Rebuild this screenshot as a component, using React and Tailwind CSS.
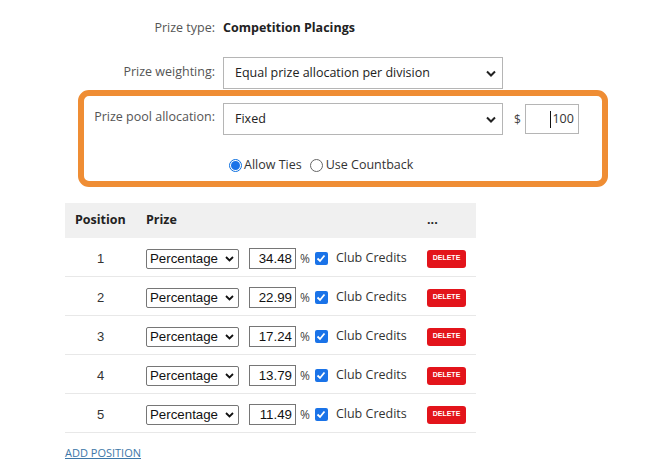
import React from "react";

const Chevron = () => (
  <svg width="10" height="7" viewBox="0 0 10 7" className="shrink-0">
    <path d="M1 1.5 L5 5.5 L9 1.5" fill="none" stroke="#222" strokeWidth="2" />
  </svg>
);

const SmallChevron = () => (
  <svg width="9" height="6" viewBox="0 0 9 6" className="shrink-0">
    <path d="M1 1 L4.5 4.5 L8 1" fill="none" stroke="#111" strokeWidth="1.8" />
  </svg>
);

const BigSelect = ({ value }) => (
  <div className="flex h-[32px] w-[280px] items-center justify-between border border-[#b5b5b5] bg-white pl-[11px] pr-[6px] text-[12.5px] text-[#222]">
    <span>{value}</span>
    <Chevron />
  </div>
);

const Radio = ({ checked }) => (
  <span className="flex h-[13px] w-[13px] items-center justify-center rounded-full border border-[#666] bg-white" style={checked ? { borderColor: "#0b6fe0" } : {}}>
    {checked && <span className="h-[9px] w-[9px] rounded-full bg-[#1a73e8]" />}
  </span>
);

const Checkbox = () => (
  <span className="flex h-[13px] w-[13px] items-center justify-center rounded-[2px] bg-[#1a73e8]">
    <svg width="10" height="9" viewBox="0 0 10 9">
      <path d="M1.5 4.5 L4 7 L8.5 1.5" fill="none" stroke="#fff" strokeWidth="1.8" />
    </svg>
  </span>
);

const rows = [
  ["1", "34.48"],
  ["2", "22.99"],
  ["3", "17.24"],
  ["4", "13.79"],
  ["5", "11.49"],
];

export default function App() {
  return (
    <div className="h-[472px] w-[645px] bg-white text-[12.5px] text-[#333]" style={{ fontFamily: '"Open Sans", "Noto Sans", sans-serif' }}>
      <div className="pt-[18px]">
        <div className="ml-[84px] flex h-[20px] items-center">
          <div className="w-[131px] text-right text-[#555]">Prize type:</div>
          <div className="ml-[8px] font-bold text-[#222]">Competition Placings</div>
        </div>
        <div className="ml-[84px] mt-[19px] flex items-start">
          <div className="w-[131px] pt-[6px] text-right text-[#555]">Prize weighting:</div>
          <div className="ml-[8px] flex">
            <BigSelect value="Equal prize allocation per division" />
          </div>
        </div>
        <div className="ml-[78px] mt-[1px] h-[97px] w-[530px] rounded-[11px] border-[6px] border-[#ef8d34] pt-[7px]">
          <div className="flex items-start">
            <div className="w-[131px] pt-[5px] text-right text-[#555]">Prize pool allocation:</div>
            <div className="ml-[8px] flex items-start">
              <BigSelect value="Fixed" />
              <span className="ml-[11px] pt-[8px] text-[12px] text-[#444]">$</span>
              <div className="ml-[4px] mt-[1px] flex h-[30px] w-[54px] items-center justify-end border border-[#b5b5b5] bg-white pr-[4px] text-[12.5px] text-[#333]">
                <span className="mr-[1px] h-[17px] w-[1px] bg-[#111]" />
                <span>100</span>
              </div>
            </div>
          </div>
          <div className="ml-[145px] mt-[21px] flex items-center text-[12.5px] text-[#333]">
            <Radio checked />
            <span className="ml-[2px]">Allow Ties</span>
            <span className="ml-[8px]"><Radio /></span>
            <span className="ml-[3px]">Use Countback</span>
          </div>
        </div>

        <div className="ml-[65px] mt-[16px] w-[411px]">
          <div className="flex h-[35px] items-center bg-[#f0f0f0] font-bold text-[#222]">
            <div className="w-[71px] pl-[10px]">Position</div>
            <div className="w-[281px] pl-[10px]">Prize</div>
            <div className="pl-[10px]">...</div>
          </div>
          {rows.map(([n, v]) => (
            <div key={n} className="flex h-[39px] items-center border-b border-[#e8e8e8] pt-[3px]">
              <div className="w-[71px] text-center text-[13px] text-[#333]" style={{ fontFamily: '"Liberation Sans", Arial, sans-serif' }}>{n}</div>
              <div className="flex w-[281px] items-center pl-[10px]">
                <div className="flex h-[20px] w-[93px] items-center justify-between rounded-[2px] border border-[#767676] bg-white pl-[3px] pr-[4px] text-[13.3px] text-[#111]" style={{ fontFamily: '"Liberation Sans", Arial, sans-serif' }}>
                  <span>Percentage</span>
                  <SmallChevron />
                </div>
                <div className="ml-[10px] flex h-[21px] w-[47px] items-center justify-end border border-[#767676] bg-white pr-[3px] text-[13.3px] text-[#111]" style={{ fontFamily: '"Liberation Sans", Arial, sans-serif' }}>
                  {v}
                </div>
                <span className="ml-[4px] text-[12px] text-[#444]">%</span>
                <span className="ml-[5px]"><Checkbox /></span>
                <span className="ml-[8px] text-[12.5px] text-[#333]">Club Credits</span>
              </div>
              <div className="pl-[10px]">
                <div className="flex h-[18px] w-[39px] items-center justify-center rounded-[3px] bg-[#e3141b] text-[7px] font-bold text-white" style={{ fontFamily: '"Liberation Sans", Arial, sans-serif' }}>
                  DELETE
                </div>
              </div>
            </div>
          ))}
          <div className="mt-[12px] text-[11px] text-[#3d77a8] underline">ADD POSITION</div>
        </div>
      </div>
    </div>
  );
}
